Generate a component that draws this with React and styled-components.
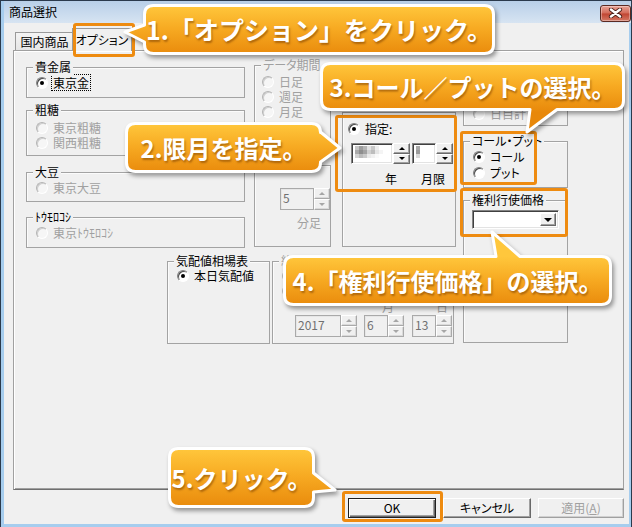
import React from "react";
import styled, { createGlobalStyle, css } from "styled-components";

const FONT = `"Noto Sans CJK JP", "Noto Sans", sans-serif`;

const GlobalStyle = createGlobalStyle`
  html, body { margin: 0; padding: 0; background: #f0f0f0; }
  body { font-family: ${FONT}; font-size: 12px; color: #000; }
  * { box-sizing: border-box; }
`;

const Window = styled.div`
  position: relative;
  width: 632px;
  height: 527px;
  display: flex;
  flex-direction: column;
  background: #f0f0f0;
  border: 1px solid #2b3a4c;
  border-bottom: none;
  overflow: hidden;
  font-feature-settings: "palt" 1;
`;

const TitleBar = styled.div`
  height: 22px;
  flex: none;
  display: flex;
  align-items: center;
  justify-content: space-between;
  padding: 0 0 0 8px;
  background: linear-gradient(#b8cfe8, #d7e4f2);
  box-shadow: inset 3px 0 #a6cdee;
`;

const TitleText = styled.span`
  font-size: 12px;
  line-height: 14px;
`;

const CloseButton = styled.div`
  width: 31px;
  height: 17px;
  margin-top: 2px;
  border: 1px solid #5b2a22;
  border-radius: 3px;
  background: linear-gradient(#e9a396, #d26a58 48%, #c04532 52%, #d47864);
  box-shadow: inset 0 0 0 1px rgba(255, 255, 255, 0.35);
  display: flex;
  align-items: center;
  justify-content: center;
`;

const Client = styled.div`
  flex: 1;
  display: flex;
  flex-direction: column;
  padding: 5px 0 0 12px;
  box-shadow: inset 3px 0 #a6cdee, inset -2px 0 #a6cdee, inset 0 -3px #a6cdee;
`;

const TabStrip = styled.div`
  height: 22px;
  flex: none;
  display: flex;
  align-items: flex-end;
  padding-left: 2px;
`;

const Tab = styled.div`
  position: relative;
  width: ${(p) => (p.$active ? 60 : 59)}px;
  height: ${(p) => (p.$active ? 23 : 18)}px;
  margin-left: ${(p) => (p.$active ? -2 : 0)}px;
  margin-bottom: ${(p) => (p.$active ? -1 : 0)}px;
  z-index: ${(p) => (p.$active ? 2 : 1)};
  display: flex;
  align-items: center;
  justify-content: center;
  border: 1px solid #9a9a9a;
  border-bottom: none;
  background: ${(p) => (p.$active ? "#f0f0f0" : "linear-gradient(#f4f4f4, #e6e6e6)")};
  font-size: 12px;
  line-height: 14px;
`;

const Panel = styled.div`
  width: 611px;
  height: 440px;
  flex: none;
  display: flex;
  align-items: flex-start;
  padding-left: 12px;
  border: 1px solid #a0a0a0;
  border-bottom-color: #6f6f6f;
  box-shadow: inset 1px 1px #fff, inset 0 -1px #a0a0a0;
  background: #f0f0f0;
`;

const LeftBlock = styled.div`
  width: 430px;
  display: flex;
  flex-direction: column;
`;

const TopRow = styled.div`
  display: flex;
  align-items: flex-start;
`;

const BottomRow = styled.div`
  display: flex;
  align-items: flex-start;
  margin-top: 13px;
  padding-left: 141px;
  gap: 2px;
`;

const Column = styled.div`
  width: ${(p) => p.$w}px;
  margin-top: ${(p) => p.$mt || 0}px;
  margin-left: ${(p) => p.$ml || 0}px;
  display: flex;
  flex-direction: column;
  flex: none;
`;

const GroupBox = styled.div`
  position: relative;
  width: ${(p) => (p.$w ? `${p.$w}px` : "100%")};
  height: ${(p) => p.$h}px;
  margin-top: ${(p) => p.$mt || 0}px;
  padding: ${(p) => p.$pt || 0}px 0 0 ${(p) => (p.$pl ?? 9)}px;
  border: 1px solid #a3a3a3;
  box-shadow: inset 1px 1px #fbfbfb;
  display: flex;
  flex-direction: column;
  flex: none;
`;

const GroupLabel = styled.span`
  position: absolute;
  top: -9px;
  left: 6px;
  padding: 0 2px;
  height: 16px;
  line-height: 16px;
  background: #f0f0f0;
  white-space: nowrap;
  color: ${(p) => (p.$muted ? "#a0a0a0" : "#000")};
`;

const RadioList = styled.div`
  display: flex;
  flex-direction: column;
  gap: ${(p) => p.$gap || 0}px;
`;

const RadioRow = styled.div`
  display: flex;
  align-items: center;
  gap: 5px;
  height: 15px;
  line-height: 15px;
  white-space: nowrap;
  color: ${(p) => (p.$disabled ? "#a0a0a0" : "#000")};
`;

const RadioCircle = styled.span`
  width: 12px;
  height: 12px;
  flex: none;
  border-radius: 50%;
  border: 1px solid;
  border-color: ${(p) => (p.$disabled ? "#b4b4b4 #fff #fff #b4b4b4" : "#808080 #fff #fff #808080")};
  background: ${(p) => (p.$disabled ? "#f6f6f6" : "#fff")};
  box-shadow: inset 1px 1px ${(p) => (p.$disabled ? "#cfcfcf" : "#4a4a4a")};
  display: flex;
  align-items: center;
  justify-content: center;
  &::after {
    content: "";
    width: 4px;
    height: 4px;
    border-radius: 50%;
    background: #000;
    display: ${(p) => (p.$checked ? "block" : "none")};
  }
`;

const FocusText = styled.span`
  outline: 1px dotted #000;
  padding: 0 1px;
  margin-left: -1px;
`;

function Radio({ checked, disabled, focus, children }) {
  return (
    <RadioRow $disabled={disabled}>
      <RadioCircle $checked={checked} $disabled={disabled} />
      {children ? focus ? <FocusText>{children}</FocusText> : <span>{children}</span> : null}
    </RadioRow>
  );
}

const SpinRow = styled.div`
  display: flex;
  align-items: flex-start;
  gap: ${(p) => p.$gap || 0}px;
  margin-top: ${(p) => p.$mt || 0}px;
  margin-left: ${(p) => p.$ml || 0}px;
`;

const SpinWrap = styled.div`
  display: flex;
  height: ${(p) => p.$h || 21}px;
  margin-left: ${(p) => p.$ml || 0}px;
  flex: none;
`;

const SpinField = styled.div`
  position: relative;
  width: ${(p) => p.$w}px;
  height: 100%;
  display: flex;
  align-items: flex-start;
  padding: 1px 2px;
  font-size: 12px;
  line-height: 15px;
  ${(p) =>
    p.$disabled
      ? css`
          background: #f0f0f0;
          border: 1px solid #a9a9a9;
          box-shadow: inset 1px 1px #e6e6e6;
          color: #707070;
        `
      : css`
          background: #fff;
          border: 1px solid;
          border-color: #848484 #fff #fff #848484;
          box-shadow: inset 1px 1px #404040, inset -1px -1px #e3e3e3;
          padding: 2px 3px;
        `}
`;

const SpinButtons = styled.div`
  width: ${(p) => p.$w || 16}px;
  height: 100%;
  display: flex;
  flex-direction: column;
`;

const SpinButton = styled.div`
  flex: 1;
  display: flex;
  align-items: center;
  justify-content: center;
  background: #f0f0f0;
  border: 1px solid;
  border-color: ${(p) => (p.$disabled ? "#fff #a9a9a9 #a9a9a9 #fff" : "#fff #696969 #696969 #fff")};
  box-shadow: inset -1px -1px ${(p) => (p.$disabled ? "#dadada" : "#a0a0a0")};
  &::after {
    content: "";
    border-left: 3px solid transparent;
    border-right: 3px solid transparent;
    ${(p) =>
      p.$dir === "up"
        ? `border-bottom: 3px solid ${p.$disabled ? "#a6a6a6" : "#000"};`
        : `border-top: 3px solid ${p.$disabled ? "#a6a6a6" : "#000"};`}
  }
`;

function Spin({ w, bw, h, ml, disabled, children }) {
  return (
    <SpinWrap $h={h} $ml={ml}>
      <SpinField $w={w} $disabled={disabled}>
        {children}
      </SpinField>
      <SpinButtons $w={bw}>
        <SpinButton $dir="up" $disabled={disabled} />
        <SpinButton $dir="down" $disabled={disabled} />
      </SpinButtons>
    </SpinWrap>
  );
}

const UnitRow = styled.div`
  display: flex;
  gap: ${(p) => p.$gap}px;
  padding-left: ${(p) => p.$pl}px;
  margin-top: ${(p) => p.$mt}px;
  height: 15px;
  line-height: 15px;
  color: ${(p) => (p.$muted ? "#a0a0a0" : "#000")};
  white-space: nowrap;
`;

const Combo = styled.div`
  width: 87px;
  height: 19px;
  display: flex;
  justify-content: flex-end;
  padding: 2px;
  background: #fff;
  border: 1px solid;
  border-color: #848484 #fff #fff #848484;
  box-shadow: inset 1px 1px #404040, inset -1px -1px #e3e3e3;
`;

const ComboButton = styled.div`
  width: 16px;
  height: 100%;
  display: flex;
  align-items: center;
  justify-content: center;
  background: #f0f0f0;
  border: 1px solid;
  border-color: #fff #696969 #696969 #fff;
  box-shadow: inset -1px -1px #a0a0a0;
  &::after {
    content: "";
    border-left: 4px solid transparent;
    border-right: 4px solid transparent;
    border-top: 4px solid #000;
    margin-top: 1px;
  }
`;

const ButtonRow = styled.div`
  width: 611px;
  margin-top: 8px;
  display: flex;
  justify-content: flex-end;
  gap: 7px;
`;

const DialogButton = styled.div`
  width: ${(p) => p.$w}px;
  height: 20px;
  display: flex;
  align-items: center;
  justify-content: center;
  font-size: 12px;
  line-height: 14px;
  color: ${(p) => (p.$disabled ? "#a0a0a0" : "#000")};
  background: #f0f0f0;
  border: 1px solid;
  border-color: ${(p) => (p.$disabled ? "#fff #a0a0a0 #a0a0a0 #fff" : "#fff #696969 #696969 #fff")};
  box-shadow: inset -1px -1px ${(p) => (p.$disabled ? "#d0d0d0" : "#a0a0a0")};
  ${(p) =>
    p.$default &&
    css`
      border-color: #202020;
      box-shadow: inset 1px 1px #fff, inset -1px -1px #696969, inset -2px -2px #a0a0a0;
    `}
`;

const Highlight = styled.div`
  position: absolute;
  left: ${(p) => p.$x - 1}px;
  top: ${(p) => p.$y - 1}px;
  width: ${(p) => p.$w}px;
  height: ${(p) => p.$h}px;
  border: 3px solid #ee8b10;
  border-radius: 3px;
  z-index: 5;
  pointer-events: none;
`;

const CalloutBox = styled.div`
  position: absolute;
  left: ${(p) => p.$x - 1}px;
  top: ${(p) => p.$y - 1}px;
  width: ${(p) => p.$w}px;
  height: ${(p) => p.$h}px;
  z-index: 10;
  display: flex;
  align-items: center;
  justify-content: center;
  padding-left: ${(p) => p.$pl || 0}px;
`;

const CalloutShape = styled.svg`
  position: absolute;
  left: 0;
  top: 0;
  overflow: visible;
  filter: drop-shadow(2px 3px 2px rgba(0, 0, 0, 0.38));
`;

const CalloutText = styled.span`
  position: relative;
  font-family: ${FONT};
  font-weight: 700;
  font-size: ${(p) => p.$size || 24}px;
  letter-spacing: ${(p) => p.$ls || 0}px;
  line-height: 1;
  color: #fff;
  white-space: nowrap;
  font-feature-settings: normal;
  text-shadow: 1px 2px 2px rgba(120, 60, 0, 0.55);
`;

function bubblePath(w, h, r, p) {
  const s = p.side;
  let d = `M ${r} 0 `;
  if (s === "top") d += `L ${p.a} 0 L ${p.tx} ${p.ty} L ${p.b} 0 `;
  d += `L ${w - r} 0 Q ${w} 0 ${w} ${r} `;
  if (s === "right") d += `L ${w} ${p.a} L ${p.tx} ${p.ty} L ${w} ${p.b} `;
  d += `L ${w} ${h - r} Q ${w} ${h} ${w - r} ${h} `;
  if (s === "bottom") d += `L ${p.b} ${h} L ${p.tx} ${p.ty} L ${p.a} ${h} `;
  d += `L ${r} ${h} Q 0 ${h} 0 ${h - r} `;
  if (s === "left") d += `L 0 ${p.b} L ${p.tx} ${p.ty} L 0 ${p.a} `;
  d += `L 0 ${r} Q 0 0 ${r} 0 Z`;
  return d;
}

function Callout({ id, x, y, w, h, side, a, b, tip, size, ls, pl, children }) {
  const horiz = side === "top" || side === "bottom";
  const off = horiz ? x : y;
  const p = {
    side,
    a: a - off - 1.5,
    b: b - off - 1.5,
    tx: tip[0] - x - 1.5,
    ty: tip[1] - y - 1.5,
  };
  const d = bubblePath(w - 3, h - 3, 9, p);
  return (
    <CalloutBox $x={x} $y={y} $w={w} $h={h} $pl={pl}>
      <CalloutShape width={w} height={h}>
        <defs>
          <linearGradient id={id} gradientUnits="userSpaceOnUse" x1="0" y1="0" x2="0" y2={h}>
            <stop offset="0" stopColor="#ffc73c" />
            <stop offset="0.45" stopColor="#f7aa22" />
            <stop offset="1" stopColor="#e8880a" />
          </linearGradient>
        </defs>
        <path
          transform="translate(1.5 1.5)"
          d={d}
          fill={`url(#${id})`}
          stroke="#fff"
          strokeWidth="3"
          strokeLinejoin="round"
        />
      </CalloutShape>
      <CalloutText $size={size} $ls={ls}>
        {children}
      </CalloutText>
    </CalloutBox>
  );
}

function Mosaic({ cells, cols, cell }) {
  const rows = Math.ceil(cells.length / cols);
  return (
    <svg width={cols * cell} height={rows * cell} style={{ display: "block" }}>
      {cells.map((c, i) => (
        <rect key={i} x={(i % cols) * cell} y={Math.floor(i / cols) * cell} width={cell} height={cell} fill={c} />
      ))}
    </svg>
  );
}

const yearCells = [
  "#c6c6c6", "#9e9e9e", "#b6b6b6", "#e2e2e2", "#c9c9c9", "#ededed", "#ffffff",
  "#aaaaaa", "#8e8e8e", "#a2a2a2", "#d0d0d0", "#bdbdbd", "#e5e5e5", "#f4f4f4",
  "#d2d2d2", "#bbbbbb", "#cacaca", "#e9e9e9", "#f1f1f1", "#fafafa", "#ffffff",
];
const monthCells = ["#a9a9a9", "#9b9b9b", "#d9d9d9"];

export default function App() {
  return (
    <>
      <GlobalStyle />
      <Window>
        <TitleBar>
          <TitleText>商品選択</TitleText>
          <CloseButton>
            <svg width="15" height="10" viewBox="0 0 15 10">
              <path d="M3 1.5 L12 8.5 M12 1.5 L3 8.5" stroke="#4a1f18" strokeWidth="4.2" strokeLinecap="round" />
              <path d="M3 1.5 L12 8.5 M12 1.5 L3 8.5" stroke="#fff" strokeWidth="2.4" strokeLinecap="round" />
            </svg>
          </CloseButton>
        </TitleBar>
        <Client>
          <TabStrip>
            <Tab>国内商品</Tab>
            <Tab $active>オプション</Tab>
          </TabStrip>
          <Panel>
            <LeftBlock>
              <TopRow>
                <Column $w={219} $mt={16}>
                  <GroupBox $h={31} $pt={7}>
                    <GroupLabel>貴金属</GroupLabel>
                    <Radio checked focus>東京金</Radio>
                  </GroupBox>
                  <GroupBox $h={46} $pt={9} $mt={12}>
                    <GroupLabel>粗糖</GroupLabel>
                    <RadioList>
                      <Radio disabled>東京粗糖</Radio>
                      <Radio disabled>関西粗糖</Radio>
                    </RadioList>
                  </GroupBox>
                  <GroupBox $h={30} $pt={7} $mt={16}>
                    <GroupLabel>大豆</GroupLabel>
                    <Radio disabled>東京大豆</Radio>
                  </GroupBox>
                  <GroupBox $h={31} $pt={7} $mt={15}>
                    <GroupLabel>ﾄｳﾓﾛｺｼ</GroupLabel>
                    <Radio disabled>東京ﾄｳﾓﾛｺｼ</Radio>
                  </GroupBox>
                </Column>
                <Column $w={77} $mt={14} $ml={9}>
                  <GroupBox $h={91} $pt={8} $pl={7}>
                    <GroupLabel $muted>データ期間</GroupLabel>
                    <RadioList>
                      <Radio disabled>日足</Radio>
                      <Radio disabled>週足</Radio>
                      <Radio disabled>月足</Radio>
                    </RadioList>
                  </GroupBox>
                  <GroupBox $h={82} $pt={22} $pl={25} $mt={9}>
                    <Spin w={34} bw={16} h={22} disabled>
                      5
                    </Spin>
                    <UnitRow $pl={17} $gap={0} $mt={5} $muted>
                      <span>分足</span>
                    </UnitRow>
                  </GroupBox>
                </Column>
                <Column $w={114} $mt={61} $ml={11}>
                  <GroupBox $h={135} $pt={8} $pl={5}>
                    <Radio checked>指定:</Radio>
                    <SpinRow $mt={7} $ml={3} $gap={2}>
                      <Spin w={42} bw={17}>
                        <Mosaic cells={yearCells} cols={7} cell={4} />
                      </Spin>
                      <Spin w={24} bw={17}>
                        <Mosaic cells={monthCells} cols={1} cell={4} />
                      </Spin>
                    </SpinRow>
                    <UnitRow $pl={37} $gap={24} $mt={7}>
                      <span>年</span>
                      <span>月限</span>
                    </UnitRow>
                  </GroupBox>
                </Column>
              </TopRow>
              <BottomRow>
                <GroupBox $w={103} $h={83} $pt={6}>
                  <GroupLabel>気配値相場表</GroupLabel>
                  <Radio checked>本日気配値</Radio>
                </GroupBox>
                <GroupBox $w={182} $h={83} $pt={6}>
                  <GroupLabel $muted>約定日</GroupLabel>
                  <RadioList>
                    <Radio disabled />
                    <Radio disabled />
                  </RadioList>
                  <UnitRow $pl={100} $gap={42} $mt={1} $muted>
                    <span>月</span>
                    <span>日</span>
                  </UnitRow>
                  <SpinRow $mt={1} $ml={13} $gap={7}>
                    <Spin w={46} bw={16} h={22} disabled>
                      2017
                    </Spin>
                    <Spin w={24} bw={16} h={22} disabled>
                      6
                    </Spin>
                    <Spin w={24} bw={16} h={22} ml={1} disabled>
                      13
                    </Spin>
                  </SpinRow>
                </GroupBox>
              </BottomRow>
            </LeftBlock>
            <Column $w={105} $mt={21} $ml={7}>
              <GroupBox $h={54} $pt={33}>
                <Radio disabled>日目計</Radio>
              </GroupBox>
              <GroupBox $h={47} $pt={7} $mt={15}>
                <GroupLabel>コール・プット</GroupLabel>
                <RadioList $gap={1}>
                  <Radio checked>コール</Radio>
                  <Radio>プット</Radio>
                </RadioList>
              </GroupBox>
              <GroupBox $h={143} $pt={9} $pl={8} $mt={12}>
                <GroupLabel>権利行使価格</GroupLabel>
                <Combo>
                  <ComboButton />
                </Combo>
              </GroupBox>
            </Column>
          </Panel>
          <ButtonRow>
            <DialogButton $w={88} $default>
              OK
            </DialogButton>
            <DialogButton $w={88}>キャンセル</DialogButton>
            <DialogButton $w={86} $disabled>
              適用(<u>A</u>)
            </DialogButton>
          </ButtonRow>
        </Client>

        <Highlight $x={73} $y={23} $w={62} $h={34} />
        <Highlight $x={335} $y={115} $w={122} $h={77} />
        <Highlight $x={460} $y={131} $w={77} $h={54} />
        <Highlight $x={460} $y={188} $w={108} $h={49} />
        <Highlight $x={342} $y={491} $w={101} $h={31} />

        <Callout id="c1" x={143} y={4} w={352} h={51} side="left" a={25} b={42} tip={[125, 32]} size={25}>
          1.「オプション」をクリック。
        </Callout>
        <Callout id="c2" x={125} y={122} w={197} h={51} side="right" a={132} b={162} tip={[340, 148]} size={24}>
          2.限月を指定。
        </Callout>
        <Callout id="c3" x={320} y={62} w={305} h={49} side="bottom" a={530} b={557} tip={[527, 132]} size={24}>
          3.コール／プットの選択。
        </Callout>
        <Callout id="c4" x={283} y={255} w={329} h={51} side="top" a={496} b={520} tip={[492, 232]} size={24}>
          4.「権利行使価格」の選択。
        </Callout>
        <Callout id="c5" x={168} y={447} w={147} h={61} side="right" a={473} b={492} tip={[335, 490]} size={24}>
          5.クリック。
        </Callout>
      </Window>
    </>
  );
}
